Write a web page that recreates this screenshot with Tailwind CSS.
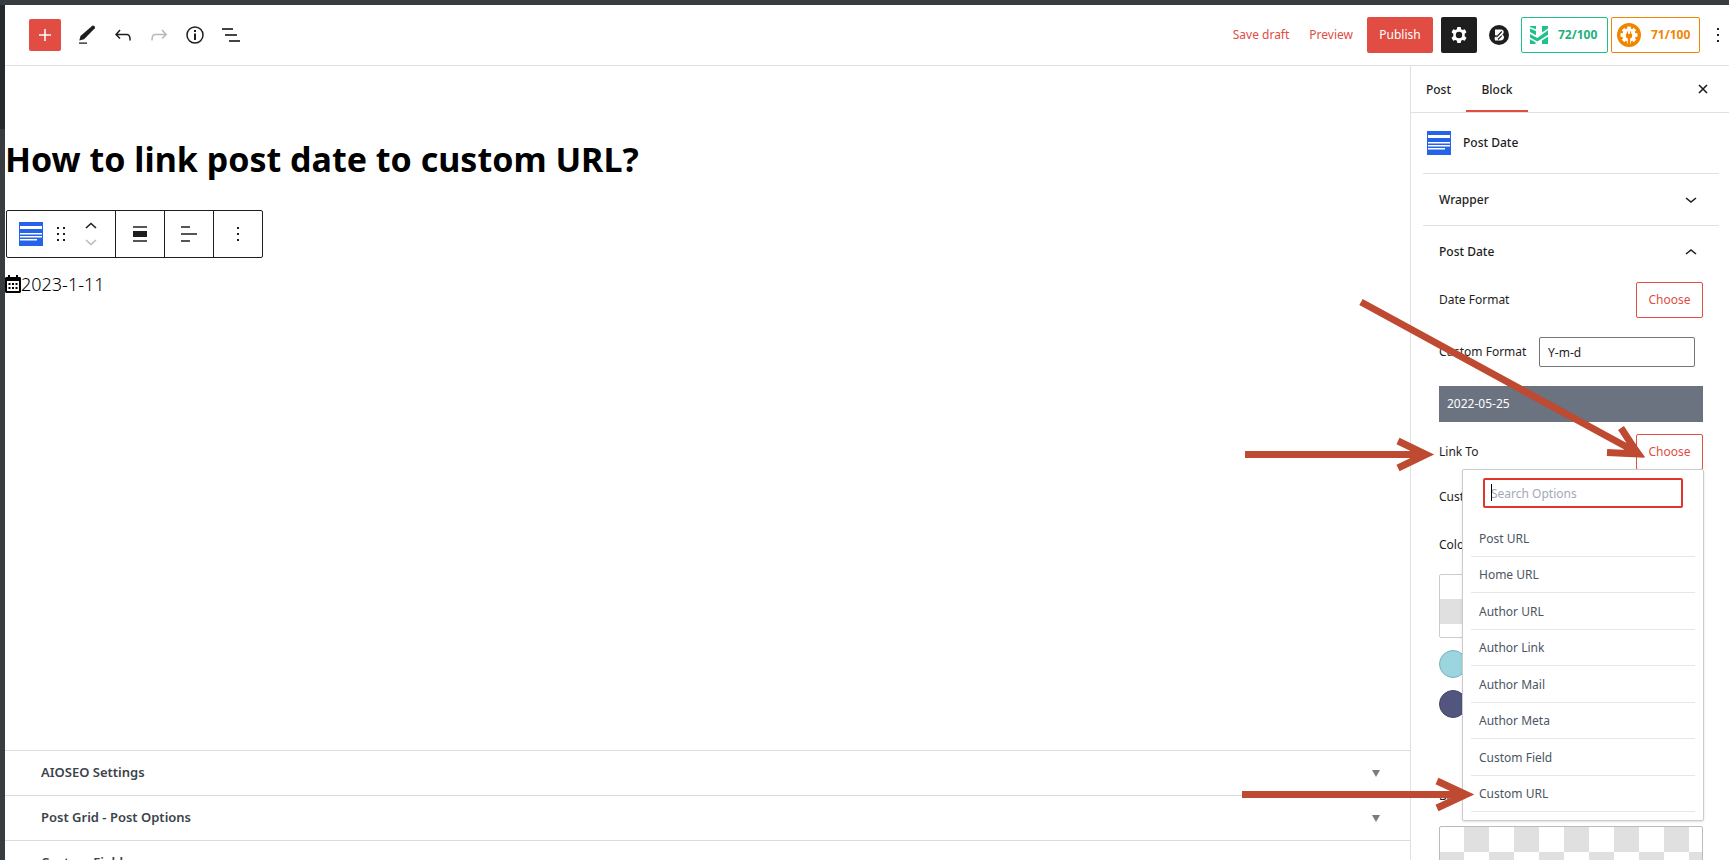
<!DOCTYPE html>
<html lang="en">
<head>
<meta charset="utf-8">
<title>Edit Post</title>
<script src="https://cdn.jsdelivr.net/npm/@tailwindcss/browser@4"></script>
</head>
<body class="relative flex h-screen flex-col overflow-hidden bg-white font-['Noto_Sans','Open_Sans',sans-serif] text-xs text-[#1e1e1e]">
<div class="h-[5px] shrink-0 bg-[#373c40]"></div>
<div class="flex min-h-0 flex-1">
  <div class="flex w-[5px] shrink-0 flex-col bg-[#373c40]"><div class="h-[124px] bg-[#25292b]"></div></div>
  <div class="flex min-w-0 flex-1 flex-col">

    <header class="flex h-[61px] shrink-0 items-center justify-between border-b border-[#e0e0e0] pl-6">
      <div class="flex items-center">
        <button aria-label="Add block" class="mr-2 flex size-8 items-center justify-center rounded-xs bg-[#e14d43] text-white">
          <svg class="size-6" viewBox="0 0 24 24" fill="currentColor"><path d="M18 11.200h-5.200V6h-1.600v5.200H6v1.600h5.200V18h1.600v-5.200H18z"/></svg></button>
        <button aria-label="Tools" class="flex size-9 items-center justify-center"><svg class="size-6" viewBox="0 0 24 24"><path fill="#1e1e1e" d="M17.300 2.700c.6-.5 1.300-.3 1.800.2l.7.800c.4.500.4 1.100 0 1.600L9.100 16.300 4.300 17.500 5.500 12.900z"/><path fill="#555" d="M4 19.300h8v1.700H4z"/></svg></button>
        <button aria-label="Undo" class="flex size-9 items-center justify-center"><svg class="size-6" viewBox="0 0 24 24" fill="currentColor"><path d="M18.300 11.700c-.6-.6-1.400-.9-2.300-.9H6.700l2.900-3.300-1.100-1-4.500 5L8.500 16l1-1-2.700-2.700H16c.5 0 .9.200 1.300.5 1 1 1 3.400 1 4.500v.3h1.500v-.2c0-1.500 0-4.300-1.500-5.700z"/></svg></button>
        <button aria-label="Redo" class="flex size-9 items-center justify-center text-[#b8b8b8]"><svg class="size-6" viewBox="0 0 24 24" fill="currentColor"><path d="M15.600 6.500l-1.100 1 2.900 3.300H8c-.9 0-1.700.3-2.300.9-1.400 1.500-1.400 4.200-1.400 5.600v.2h1.500v-.3c0-1.100 0-3.500 1-4.500.3-.3.700-.5 1.300-.5h9.200L14.500 15l1.100 1.100 4.600-4.600-4.600-5z"/></svg></button>
        <button aria-label="Details" class="flex size-9 items-center justify-center"><svg class="size-6" viewBox="0 0 24 24"><circle cx="12" cy="12" r="8" fill="none" stroke="currentColor" stroke-width="1.500"/><path fill="currentColor" d="M11 7h2v2h-2zM11 10.500h2V17h-2z"/></svg></button>
        <button aria-label="List view" class="flex size-9 items-center justify-center"><svg class="size-6" viewBox="0 0 24 24" fill="#444"><path d="M3 5h11v2H3zM6 11h12v2H6zM10 17h11v2H10z"/></svg></button>
      </div>
      <div class="flex items-center pr-px">
        <button class="mr-5 text-[#e14d43]">Save draft</button>
        <button class="mr-[14px] text-[#e14d43]">Preview</button>
        <button class="mr-2 h-9 w-[66px] rounded-xs bg-[#e14d43] text-white">Publish</button>
        <button aria-label="Settings" class="mr-3 flex size-9 items-center justify-center rounded-xs bg-[#1e1e1e] text-white"><svg class="size-6" viewBox="0 0 24 24" fill="currentColor"><path fill-rule="evenodd" d="M10.300 4h3.400l.4 2.200 1.500.9 2.200-.8 1.700 3-1.800 1.500v2.400l1.800 1.500-1.700 3-2.200-.8-1.500.9-.4 2.200h-3.400l-.4-2.200-1.500-.9-2.200.8-1.700-3 1.800-1.500v-2.400L4.500 9.300l1.700-3 2.200.8 1.500-.9zM12 8.800a3.200 3.200 0 1 0 0 6.400 3.200 3.200 0 0 0 0-6.400z"/></svg></button>
        <button aria-label="Blocks" class="mr-3"><svg class="size-5" viewBox="0 0 20 20"><circle cx="10" cy="10" r="10" fill="#1e1e1e"/><path d="M6 4.500h6c1.800 0 2.700 1 2.700 2.500 0 1.200-.6 2-1.500 2.700 1.200.5 1.800 1.400 1.800 2.600 0 2-1.300 3.200-3.400 3.200H6l-.5-2.500L8 10.200H6z" fill="#fff"/><path d="M7.500 12 12.800 6.500M9 14.500l3.800-3.800" stroke="#1e1e1e" stroke-width="1.200"/></svg></button>
        <button class="mr-[3px] flex h-9 w-[87px] items-center rounded-xs border border-[#1fc18a] pl-2 font-bold text-[#22b07d]">
          <svg class="mr-[10px] size-[18px]" viewBox="0 0 18 18" fill="#1fc18a"><path d="M0 0h6v3.200L0 .9zM12 0h6v2.600l-6 3.800zM0 2.600l6 2.500v4.200L0 6zM0 7.900l7.300 4L18 4.300v4.500L7.400 15.600 0 11.500zM0 13.300l5.500 3V18H0zM12 14.400l6-3.700V18h-6z"/></svg>72/100</button>
        <button class="mr-4 flex h-9 w-[89px] items-center rounded-xs border border-[#f18500] pl-[5px] font-bold text-[#f18500]">
          <svg class="mr-[10px] size-6" viewBox="0 0 24 24"><circle cx="12" cy="12" r="12" fill="#f18500"/><circle cx="12" cy="12" r="6.800" fill="#fff"/><circle cx="12" cy="12" r="7.200" fill="none" stroke="#fff" stroke-width="2.600" stroke-dasharray="3.200 1.900" stroke-dashoffset="1.600" pathLength="40.800"/><path d="M9.900 8.500h1.100v2.300h2V8.500h1.100v2.300h1v2.400c0 1.200-.9 2-2 2.300V21h-2.200v-5.500c-1.200-.3-2-1.100-2-2.300v-2.400h1z" fill="#f18500"/></svg>71/100</button>
        <button aria-label="Options" class="w-3"><svg class="h-6 w-1" viewBox="0 0 4 24" fill="#1e1e1e"><path d="M1 5h2v2H1zM1 11h2v2H1zM1 17h2v2H1z"/></svg></button>
      </div>
    </header>

    <div class="flex min-h-0 flex-1">
      <main class="flex min-w-0 flex-1 flex-col">
        <div class="flex-1 pt-[68px]">
          <h1 class="text-[34px] leading-[50px] font-bold text-black">How to link post date to custom URL?</h1>
          <div class="mt-[26px] ml-px flex h-12 w-[257px] rounded-xs border border-[#1e1e1e]">
            <div class="flex w-[109px] items-center border-r border-[#1e1e1e] pl-3">
              <button aria-label="Post Date"><svg class="size-6" viewBox="0 0 24 24"><path fill="#2563eb" d="M0 0h24v24H0z"/><path fill="#fff" d="M1 4h22v3H1zM1 11h22v1.500H1zM1 14h22v1.500H1zM1 17h17v1.500H1z"/></svg></button>
              <button aria-label="Drag" class="ml-3"><svg class="h-6 w-3" viewBox="0 0 12 24" fill="#1e1e1e"><path d="M2 5h2v2H2zM8 5h2v2H8zM2 11h2v2H2zM8 11h2v2H8zM2 17h2v2H2zM8 17h2v2H8z"/></svg></button>
              <div class="ml-[18px] flex flex-col gap-2">
                <button aria-label="Move up"><svg class="block h-2 w-3" viewBox="0 0 12 8" fill="none" stroke="#1e1e1e" stroke-width="1.600"><path d="m1 6 5-4.500L11 6"/></svg></button>
                <button aria-label="Move down"><svg class="block h-2 w-3" viewBox="0 0 12 8" fill="none" stroke="#bbb" stroke-width="1.600"><path d="m1 2 5 4.500L11 2"/></svg></button>
              </div>
            </div>
            <button aria-label="Align" class="flex w-[49px] items-center justify-center border-r border-[#1e1e1e]"><svg class="size-6" viewBox="0 0 24 24"><path fill="#555" d="M5 4h14v2H5zM5 18h14v2H5z"/><path fill="#1e1e1e" d="M5 9h14v6H5z"/></svg></button>
            <button aria-label="Justify" class="flex w-[49px] items-center justify-center border-r border-[#1e1e1e]"><svg class="size-6" viewBox="0 0 24 24" fill="#555"><path d="M4 4h9v2H4zM4 11h16v2H4zM4 18h9v2H4z"/></svg></button>
            <button aria-label="More" class="flex flex-1 items-center justify-center"><svg class="size-6" viewBox="0 0 24 24" fill="#1e1e1e"><path d="M11 5h2v2h-2zM11 11h2v2h-2zM11 17h2v2h-2z"/></svg></button>
          </div>
          <div class="mt-3 flex items-center text-lg leading-7 font-light text-black">
            <svg class="h-[18px] w-4" viewBox="0 0 16 18"><path fill="#000" fill-rule="evenodd" d="M3 0h2v2h6V0h2v2h2l1 1v14l-1 1H1l-1-1V3l1-1h2zM2 6v10h12V6z"/><path d="M3.500 8h2v2h-2zM7 8h2v2H7zM10.500 8h2v2h-2zM3.500 12h2v2h-2zM7 12h2v2H7zM10.500 12h2v2h-2z"/></svg>2023-1-11</div>
        </div>
        <section class="h-[110px] shrink-0 text-[13px] font-semibold text-[#3c434a]">
          <button class="flex h-[45px] w-full items-center justify-between border-t border-[#dcdcde] pr-[30px] pl-9"><span>AIOSEO Settings</span><svg class="h-[7px] w-2" viewBox="0 0 8 7"><path fill="#787c82" d="M0 0h8L4 7z"/></svg></button>
          <button class="flex h-[45px] w-full items-center justify-between border-t border-[#dcdcde] pr-[30px] pl-9"><span>Post Grid - Post Options</span><svg class="h-[7px] w-2" viewBox="0 0 8 7"><path fill="#787c82" d="M0 0h8L4 7z"/></svg></button>
          <button class="flex h-[45px] w-full items-center border-t border-[#dcdcde] pl-9">Custom Fields</button>
        </section>
      </main>

      <aside class="w-[319px] shrink-0 border-l border-[#e0e0e0]">
        <div class="flex h-[47px] items-stretch border-b border-[#e0e0e0] pr-5">
          <button class="w-[55px] pt-px font-medium">Post</button>
          <button class="w-[62px] border-b-2 border-[#e14d43] pt-[3px] font-medium">Block</button>
          <button aria-label="Close" class="ml-auto"><svg class="size-3" viewBox="0 0 12 12" fill="none" stroke="#1e1e1e" stroke-width="1.600"><path d="m2 2 8 8M10 2l-8 8"/></svg></button>
        </div>
        <div class="pr-[10px] pl-3">
          <div class="flex h-[61px] items-center gap-3 border-b border-[#e0e0e0] pl-1 font-medium">
            <svg class="size-6" viewBox="0 0 24 24"><path fill="#2563eb" d="M0 0h24v24H0z"/><path fill="#fff" d="M1 4h22v3H1zM1 11h22v1.500H1zM1 14h22v1.500H1zM1 17h17v1.500H1z"/></svg>Post Date</div>
          <button class="flex h-[52px] w-full items-center justify-between border-b border-[#e0e0e0] px-4 pt-px pr-[22px] font-medium">Wrapper<svg class="h-2 w-3" viewBox="0 0 12 8" fill="none" stroke="#1e1e1e" stroke-width="1.600"><path d="m1 2 5 4L11 2"/></svg></button>
          <button class="flex h-[52px] w-full items-center justify-between px-4 pr-[22px] font-medium">Post Date<svg class="h-2 w-3" viewBox="0 0 12 8" fill="none" stroke="#1e1e1e" stroke-width="1.600"><path d="m1 6 5-4 5 4"/></svg></button>
          <div class="px-4">
            <div class="mt-1 flex h-9 items-center justify-between"><span>Date Format</span><button class="h-9 w-[67px] rounded-xs border border-[#e14d43] text-[#e14d43]">Choose</button></div>
            <div class="mt-[19px] flex h-[30px] items-center justify-between pr-2"><label for="fmt">Custom Format</label><input id="fmt" value="Y-m-d" class="h-[30px] w-[156px] rounded-xs border border-[#757575] px-2"></div>
            <div class="mt-[19px] flex h-9 items-center bg-[#6b7280] px-2 text-white">2022-05-25</div>
            <div class="relative mt-3 flex h-9 items-center justify-between"><span>Link To</span><button class="h-9 w-[67px] rounded-xs border border-[#e14d43] text-[#e14d43]">Choose</button>
              <div class="absolute top-[35px] -right-px z-10 flex h-[352px] w-[242px] flex-col rounded-xs border border-[#ccc] bg-white px-2 pt-2 pb-2 text-[#4b5563] shadow-sm">
                <div class="relative mx-3 mb-3 h-[30px] shrink-0">
                  <input aria-label="Search Options" placeholder="Search Options" class="h-[30px] w-full rounded-xs border-2 border-[#e0352b] px-[6px] placeholder:text-[#a3a9b5]">
                  <span class="absolute top-[6px] left-2 h-[17px] w-px bg-black"></span>
                </div>
                <a href="#" class="flex flex-1 items-center border-b border-gray-200 px-2 pt-[2px]">Post URL</a>
                <a href="#" class="flex flex-1 items-center border-b border-gray-200 px-2 pt-[2px]">Home URL</a>
                <a href="#" class="flex flex-1 items-center border-b border-gray-200 px-2 pt-[2px]">Author URL</a>
                <a href="#" class="flex flex-1 items-center border-b border-gray-200 px-2 pt-[2px]">Author Link</a>
                <a href="#" class="flex flex-1 items-center border-b border-gray-200 px-2 pt-[2px]">Author Mail</a>
                <a href="#" class="flex flex-1 items-center border-b border-gray-200 px-2 pt-[2px]">Author Meta</a>
                <a href="#" class="flex flex-1 items-center border-b border-gray-200 px-2 pt-[2px]">Custom Field</a>
                <a href="#" class="flex flex-1 items-center border-b border-gray-200 px-2 pt-[2px]">Custom URL</a>
              </div>
            </div>
            <div class="mt-[17px] h-5 leading-5">Custom URL</div>
            <div class="mt-7 h-5 leading-5">Color</div>
            <div class="mt-[19px] h-16 rounded-xs border border-[#ccc] pt-6"><div class="h-[25px] w-[25px] bg-[#e0e0e0]"></div></div>
            <button aria-label="Light blue" class="mt-3 block size-7 rounded-full border border-[#7fb0b7] bg-[#9bd5de]"></button>
            <button aria-label="Indigo" class="mt-3 block size-7 rounded-full border border-[#44476b] bg-[#52557d]"></button>
            <div class="mt-[68px] mb-5 h-5 w-6 overflow-hidden leading-5">Bac</div>
            <div class="h-16 rounded-xs border border-[#bbb] bg-[conic-gradient(#e0e0e0_25%,#fff_0_50%,#e0e0e0_0_75%,#fff_0)] bg-[length:50px_50px] bg-[position:-1px_0px]"></div>
          </div>
        </div>
      </aside>
    </div>
  </div>
</div>

<svg class="pointer-events-none absolute top-0 right-0 z-20 h-[860px] w-[529px]" viewBox="1200 0 529 860" fill="none" stroke="#be4a31" stroke-width="7" aria-hidden="true">
  <path d="M1245 454.500h178M1398 441l28 13.500L1398 468"/><path fill="#be4a31" stroke="none" d="m1410 447 24 7.500-24 7.500z"/>
  <path d="M1361 302l275 150M1621 428l17 26-31-1.500"/><path fill="#be4a31" stroke="none" d="m1630 437 15 20-24-1z"/>
  <path d="M1242 794.500h222M1437 781l29 13.500-29 13.500"/><path fill="#be4a31" stroke="none" d="m1450 786 23 8.500-23 8.500z"/>
</svg>
</body>
</html>
